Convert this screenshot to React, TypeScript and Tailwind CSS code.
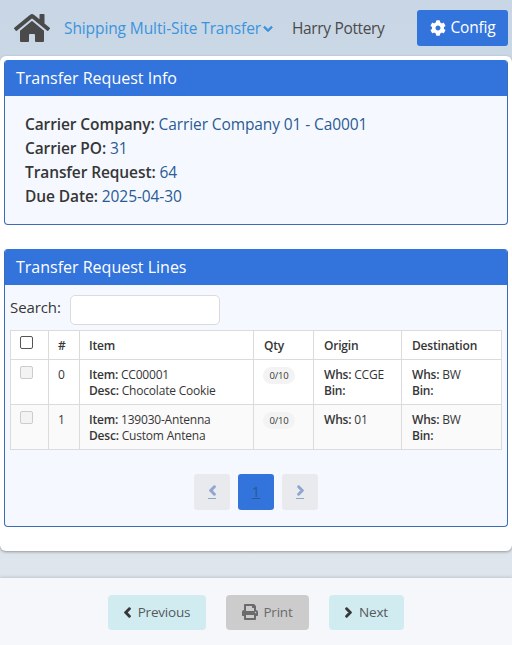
import { FaHome, FaCog, FaPrint, FaChevronLeft, FaChevronRight, FaChevronDown } from 'react-icons/fa'

const lines = [
  { n: 0, item: 'CC00001', desc: 'Chocolate Cookie', whs: 'CCGE', bin: true, dest: 'BW' },
  { n: 1, item: '139030-Antenna', desc: 'Custom Antena', whs: '01', bin: false, dest: 'BW' },
]

function Panel({ title, className, children }: { title: string; className?: string; children: React.ReactNode }) {
  return (
    <div className={`border border-[#3a6db5] border-t-0 rounded-[4px] bg-[#f5f9ff] overflow-hidden ${className ?? ''}`}>
      <div className="h-9 bg-[#3273dc] text-white text-[16px] leading-9 px-3 -mx-px">{title}</div>
      {children}
    </div>
  )
}

export default function App() {
  return (
    <div className="h-[645px] w-[512px] overflow-hidden flex flex-col bg-gradient-to-b from-[#c8d6e5] to-[#e2e7ed] font-['Open_Sans','Noto_Sans',sans-serif] text-[#363636]">
      {/* Header */}
      <div className="h-14 shrink-0 flex items-center">
        <FaHome className="ml-[14px] text-[#4a4a4a]" size={36} />
        <div className="ml-[14px] mt-[1px] flex items-center text-[#3b94dc] text-[15.5px] whitespace-nowrap tracking-[-0.1px]">
          Shipping Multi-Site Transfer
          <FaChevronDown className="ml-[2px]" size={10} stroke="currentColor" strokeWidth={50} />
        </div>
        <div className="ml-[19px] mt-[1px] text-[15.5px] text-[#4a4a4a] whitespace-nowrap tracking-[-0.35px]">Harry Pottery</div>
        <div className="ml-auto mr-[4px] -mt-[1px] h-9 w-[91px] rounded-[3px] bg-[#3273dc] text-white flex items-center justify-center gap-[5px] text-[15.5px] tracking-[-0.2px]">
          <FaCog size={16} />
          Config
        </div>
      </div>

      {/* Main card */}
      <div className="h-[495px] shrink-0 bg-white rounded-[6px] shadow-[0_1px_3px_rgba(0,0,0,0.35)] p-1">
        <Panel title="Transfer Request Info" className="h-[165px]">
          <div className="pt-[16px] pl-[20px] text-[15.5px] leading-6 tracking-[-0.1px] text-[#2b5a94]">
            <div><b className="font-semibold text-[#363636]">Carrier Company:</b> Carrier Company 01 - Ca0001</div>
            <div><b className="font-semibold text-[#363636]">Carrier PO:</b> 31</div>
            <div><b className="font-semibold text-[#363636]">Transfer Request:</b> 64</div>
            <div><b className="font-semibold text-[#363636]">Due Date:</b> 2025-04-30</div>
          </div>
        </Panel>

        <Panel title="Transfer Request Lines" className="h-[278px] mt-6">
          <div className="px-[5px]">
            <div className="flex items-center pt-[10px] pb-[5px]">
              <span className="text-[15px] tracking-[-0.1px] mb-[6px]">Search:</span>
              <div className="ml-[9px] h-[30px] w-[150px] rounded-[5px] border border-[#dbdbdb] bg-white" />
            </div>
            <table className="w-[492px] table-fixed border-collapse bg-white text-[12px] leading-[16px] tracking-[-0.2px]">
              <thead>
                <tr className="h-[29px] text-left">
                  <th className="w-[38px] border border-[#dbdbdb] align-top pt-[5px] pl-[9px]">
                    <div className="h-[13px] w-[13px] rounded-[2px] border border-[#555] bg-white" />
                  </th>
                  <th className="w-[31px] border border-[#dbdbdb] pl-[9px] pt-[1px] font-semibold">#</th>
                  <th className="w-[174px] border border-[#dbdbdb] pl-[9px] pt-[1px] font-semibold">Item</th>
                  <th className="w-[60px] border border-[#dbdbdb] pl-[10px] pt-[1px] font-semibold">Qty</th>
                  <th className="w-[88px] border border-[#dbdbdb] pl-[10px] pt-[1px] font-semibold">Origin</th>
                  <th className="border border-[#dbdbdb] pl-[10px] pt-[1px] font-semibold">Destination</th>
                </tr>
              </thead>
              <tbody>
                {lines.map((l) => (
                  <tr key={l.n} className={`h-[45px] ${l.n % 2 ? 'bg-[#fafafa]' : 'bg-white'}`}>
                    <td className="border border-[#dbdbdb] align-top pt-[6px] pl-[9px]">
                      <div className="h-[13px] w-[13px] rounded-[2px] border border-[#ccc] bg-[#f3f3f3]" />
                    </td>
                    <td className="border border-[#dbdbdb] align-top pt-[7px] pl-[9px]">{l.n}</td>
                    <td className="border border-[#dbdbdb] align-top pt-[7px] pl-[9px] whitespace-nowrap">
                      <div><b className="font-semibold">Item:</b> {l.item}</div>
                      <div><b className="font-semibold">Desc:</b> {l.desc}</div>
                    </td>
                    <td className="border border-[#dbdbdb] align-top pt-[7px] pl-[9px]">
                      <span className="block h-[17px] w-[32px] rounded-full bg-[#f3f3f3] text-center text-[9.5px] leading-[17px]">0/10</span>
                    </td>
                    <td className="border border-[#dbdbdb] align-top pt-[7px] pl-[10px]">
                      <div><b className="font-semibold">Whs:</b> {l.whs}</div>
                      {l.bin && <div><b className="font-semibold">Bin:</b></div>}
                    </td>
                    <td className="border border-[#dbdbdb] align-top pt-[7px] pl-[10px]">
                      <div><b className="font-semibold">Whs:</b> {l.dest}</div>
                      <div><b className="font-semibold">Bin:</b></div>
                    </td>
                  </tr>
                ))}
              </tbody>
            </table>
            <div className="flex justify-center gap-2 mt-6">
              <div className="h-9 w-9 rounded-[3px] bg-[#e8eaee] flex flex-col items-center justify-center text-[#8ea5cf]">
                <FaChevronLeft size={11} stroke="currentColor" strokeWidth={50} />
                <div className="h-px w-2 bg-[#8ea5cf] mt-[2px]" />
              </div>
              <div className="h-9 w-9 rounded-[3px] bg-[#3273dc] text-center text-[14.5px] leading-9 underline text-[#2b5a94]">1</div>
              <div className="h-9 w-9 rounded-[3px] bg-[#e8eaee] flex flex-col items-center justify-center text-[#8ea5cf]">
                <FaChevronRight size={11} stroke="currentColor" strokeWidth={50} />
                <div className="h-px w-2 bg-[#8ea5cf] mt-[2px]" />
              </div>
            </div>
          </div>
        </Panel>
      </div>

      <div className="h-[27px] shrink-0" />

      {/* Footer */}
      <div className="flex-1 bg-[#f5f7fa] shadow-[0_-1px_3px_rgba(0,0,0,0.15)] flex items-center justify-center text-[13.5px] tracking-[-0.2px] pt-[1px]">
        <div className="h-[35px] w-[98px] rounded-[4px] bg-[#d1ecf1] flex items-center justify-center gap-[5px] pr-[2px] text-[#55595c]">
          <FaChevronLeft size={11} className="text-[#363636]" stroke="currentColor" strokeWidth={50} />
          Previous
        </div>
        <div className="ml-[20px] h-[35px] w-[83px] rounded-[4px] bg-[#cccccc] flex items-center justify-center gap-[5px] text-[#6b6b6b]">
          <FaPrint size={16} />
          Print
        </div>
        <div className="ml-[20px] h-[35px] w-[75px] rounded-[4px] bg-[#d1ecf1] flex items-center justify-center gap-[5px] pr-[2px] text-[#55595c]">
          <FaChevronRight size={11} className="text-[#363636]" stroke="currentColor" strokeWidth={50} />
          Next
        </div>
      </div>
    </div>
  )
}
